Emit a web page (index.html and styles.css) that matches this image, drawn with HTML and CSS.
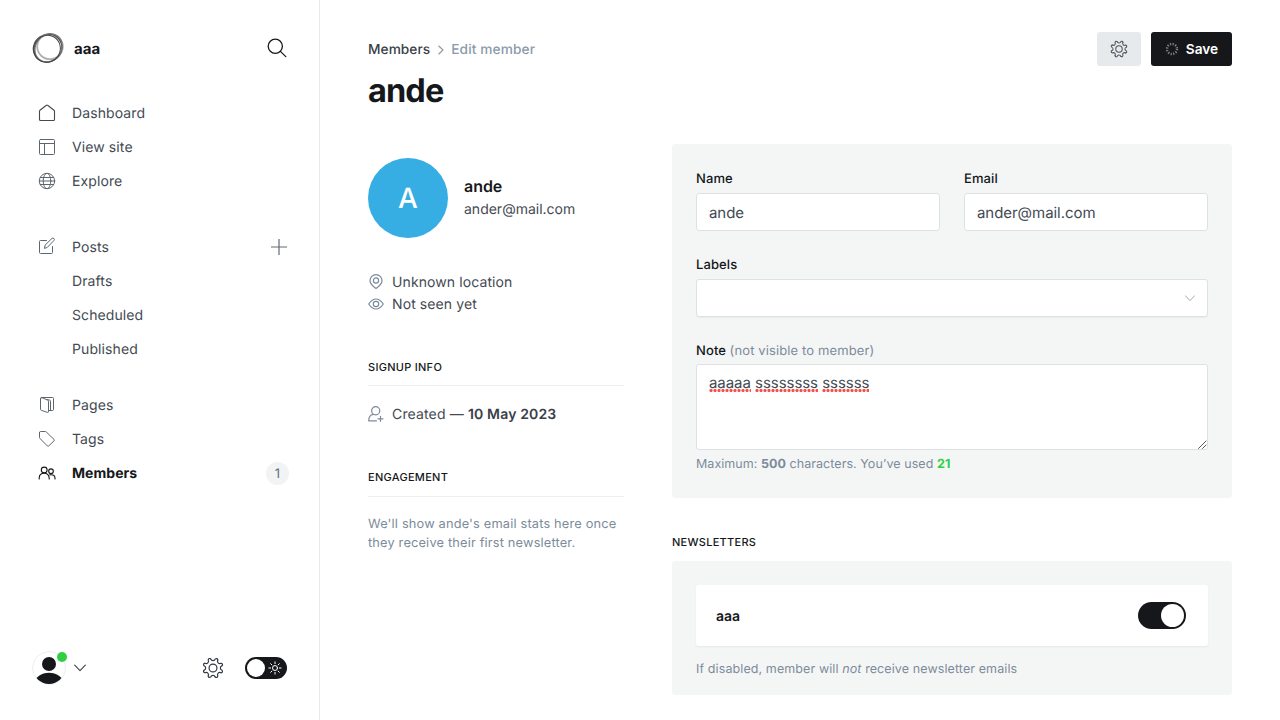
FILE: index.html
```html
<!DOCTYPE html>
<html lang="en">
<head>
<meta charset="utf-8">
<title>Members - ande</title>
<link rel="stylesheet" href="styles.css">
</head>
<body>
<svg class="defs" aria-hidden="true">
  <symbol id="gear" viewBox="-12 -12 24 24">
    <g id="gear-body">
      <g id="gear-half">
        <g id="gear-quarter">
          <path id="gear-tooth" d="M-2.5-9.9C-1.6-7.3 1.6-7.3 2.5-9.9Q4.9-11.1 5.2-8.75"/>
          <use href="#gear-tooth" transform="rotate(45)"/>
        </g>
        <use href="#gear-quarter" transform="rotate(90)"/>
      </g>
      <use href="#gear-half" transform="rotate(180)"/>
      <circle r="4.3"/>
    </g>
  </symbol>
</svg>
<div class="app">
  <aside class="sidebar">
    <header class="brand">
      <svg class="brand-logo" viewBox="0 0 32 32">
        <ellipse cx="18" cy="14.6" rx="12.800" ry="12.600" stroke="#b0b0b0" stroke-width="1.8"/>
        <ellipse cx="15.6" cy="16.2" rx="14.6" ry="13.6" transform="rotate(-35 15.6 16.2)" stroke="#444" stroke-width="1.200"/>
        <ellipse cx="16.6" cy="15.8" rx="14.800" ry="12.800" transform="rotate(-50 16.6 15.8)" stroke="#777" stroke-width="1.200"/>
        <ellipse cx="15.200" cy="16.8" rx="13" ry="13.6" transform="rotate(30 15.200 16.8)" stroke="#444" stroke-width="1"/>
      </svg>
      <span class="brand-name">aaa</span>
      <svg class="search" viewBox="0 0 20 20"><circle cx="8.3" cy="8.3" r="7.1"/><path d="M13.4 13.4l5.400 5.200"/></svg>
    </header>
    <nav class="nav">
      <ul class="nav-group">
        <li><svg viewBox="0 0 18 18"><path d="M1.5 7.2v8.3q0 1 1 1h13q1 0 1-1V7.2q0-.6-.5-1L9.6 1.3Q9 .8 8.4 1.3L2 6.2q-.5.4-.5 1z"/></svg><span>Dashboard</span></li>
        <li><svg class="soft" viewBox="0 0 18 18"><rect x="1.5" y="1.5" width="15" height="15" rx="1"/><path d="M1.5 5.500h15M6.500 5.500v11"/></svg><span>View site</span></li>
        <li><svg class="soft" viewBox="0 0 18 18"><circle cx="9" cy="9" r="7.7"/><ellipse cx="9" cy="9" rx="3.8" ry="7.7"/><path d="M1.3 9h15.4M2.3 5.500h13.4M2.3 12.500h13.4"/></svg><span>Explore</span></li>
      </ul>
      <ul class="nav-group posts">
        <li><svg class="soft pencil" viewBox="0 0 18 18"><path d="M8.500 3.500h-6q-1 0-1 1v11q0 1 1 1h11q1 0 1-1v-6M6.500 11l.7-3L14 1.400q1-.8 1.900.1t.1 1.900L9.500 10.200z"/></svg><span>Posts</span><svg class="plus" viewBox="0 0 16 16"><path d="M8 0v16M0 8h16"/></svg></li>
        <li class="child"><span>Drafts</span></li>
        <li class="child"><span>Scheduled</span></li>
        <li class="child"><span>Published</span></li>
      </ul>
      <ul class="nav-group">
        <li><svg class="soft" viewBox="0 0 18 18"><path d="M2.5 2.5v10.8q0 .8.8 1l6.2 2.1q1 .3 1-.7V5.2q0-.9-.9-1.2L4 1.700q-1.500-.4-1.500.8zM3.3 1.500h11.2q1 0 1 1v11q0 1-1 1h-4M8.500 3.600l3 .4q1 .3 1 1.200v9"/></svg><span>Pages</span></li>
        <li><svg class="soft" viewBox="0 0 18 18"><path d="M1.5 2.5v5q0 .5.4.9l7.4 7.5q.8.7 1.5 0l5.2-5q.8-.7 0-1.5L8.3 2Q7.9 1.5 7.2 1.5H2.5q-1 0-1 1z"/></svg><span>Tags</span></li>
        <li class="active"><svg viewBox="0 0 18 18"><circle cx="6.2" cy="6" r="2.9"/><path d="M1.200 15v-1.200q.2-4.500 5-4.500 4.300 0 5 4.500V15"/><circle cx="13" cy="7.200" r="2.3"/><path d="M11.8 10.900q5-.9 5.200 3.100v1"/></svg><span>Members</span><b class="count">1</b></li>
      </ul>
    </nav>
    <footer class="side-foot">
      <div class="avatar">
        <svg viewBox="0 0 34 34"><defs><clipPath id="face"><circle cx="17" cy="17" r="16"/></clipPath></defs><circle cx="17" cy="17" r="16.4" fill="#fff" stroke="#e6e8ea" stroke-width=".8"/><g clip-path="url(#face)" fill="#15171a"><circle cx="17" cy="13" r="7"/><ellipse cx="17" cy="32" rx="14" ry="10.3"/></g></svg>
        <i class="online"></i>
      </div>
      <svg class="chev" viewBox="0 0 12 8"><path d="M.7 1.200L6 6.600l5.300-5.400"/></svg>
      <svg class="gear big"><use href="#gear"/></svg>
      <div class="night"><i></i><svg viewBox="-7 -7 14 14"><circle r="2.5"/><path d="M0-6.1v1.7M0 6.1V4.4M-6.1 0h1.7M6.1 0H4.4M-4.3-4.3l1.2 1.2M4.3 4.3L3.1 3.1M-4.3 4.3l1.2-1.2M4.3-4.3L3.1-3.1"/></svg></div>
    </footer>
  </aside>
  <main class="main">
    <header class="top">
      <div>
        <div class="crumbs"><span>Members</span><svg viewBox="0 0 6 10"><path d="M.8 1l4.200 4-4.200 4"/></svg><span class="here">Edit member</span></div>
        <h1>ande</h1>
      </div>
      <div class="actions">
        <button class="btn btn-gear"><svg class="gear"><use href="#gear"/></svg></button>
        <button class="btn btn-save"><svg viewBox="-7 -7 14 14"><circle r="5"/></svg><span>Save</span></button>
      </div>
    </header>
    <div class="columns">
      <section class="profile">
        <div class="person">
          <div class="initial">A</div>
          <div><h3>ande</h3><p>ander@mail.com</p></div>
        </div>
        <div class="facts">
          <p><svg viewBox="0 0 16 16"><path d="M8 14.500Q2 10.300 2 6.500a6 5.900 0 0 1 12 0Q14 10.300 8 14.500z"/><circle cx="8" cy="6.500" r="2.6"/></svg><span>Unknown location</span></p>
          <p><svg viewBox="0 0 16 16"><path d="M.7 8Q4 3 8 3t7.300 5Q12 13 8 13T.7 8z"/><circle cx="8" cy="8" r="2.7"/></svg><span>Not seen yet</span></p>
        </div>
        <h4>Signup info</h4>
        <p class="created"><svg viewBox="0 0 16 16"><circle cx="7.7" cy="4.8" r="4.1"/><path d="M5.300 8.300Q.7 9 .7 14.800h7.800M12.500 10.300v5M10 12.800h5"/></svg><span>Created — <b>10 May 2023</b></span></p>
        <h4 class="engage">Engagement</h4>
        <p class="stats">We'll show ande's email stats here once they receive their first newsletter.</p>
      </section>
      <section class="details">
        <div class="panel form">
          <div class="pair">
            <div><label>Name</label><div class="input">ande</div></div>
            <div><label>Email</label><div class="input">ander@mail.com</div></div>
          </div>
          <label>Labels</label>
          <div class="input select"><svg viewBox="0 0 10 7"><path d="M.5.8L5 5.700 9.500.8"/></svg></div>
          <label>Note <span>(not visible to member)</span></label>
          <div class="input note"><span class="typo">aaaaa</span> <span class="typo">ssssssss</span> <span class="typo">ssssss</span><svg viewBox="0 0 9 9"><path d="M.5 8.500l7.500-7.500M4.500 8.500l3.500-3.500"/></svg></div>
          <p class="hint">Maximum: <b>500</b> characters. You’ve used <b class="used">21</b></p>
        </div>
        <h4 class="news-title">Newsletters</h4>
        <div class="panel news">
          <div class="news-card"><b>aaa</b><div class="toggle"><i></i></div></div>
          <p class="hint">If disabled, member will <em>not</em> receive newsletter emails</p>
        </div>
      </section>
    </div>
  </main>
</div>
</body>
</html>
```
FILE: styles.css
```css
* { box-sizing: border-box; margin: 0; padding: 0; }
body { font: 400 14px/20px Inter, "Liberation Sans", sans-serif; letter-spacing: .1px; color: #434a52; background: #fff; text-rendering: geometricPrecision; }
svg { display: block; flex: none; fill: none; stroke: currentColor; stroke-linecap: round; stroke-linejoin: round; }
.defs { position: absolute; width: 0; height: 0; }
.app { display: flex; width: 1280px; height: 720px; overflow: hidden; }

.sidebar { display: flex; flex-direction: column; width: 320px; flex: none; padding: 32px 32px 35px; border-right: 1px solid #e6e9eb; }
.brand { display: flex; align-items: center; height: 32px; margin-bottom: 32px; color: #15171a; }
.brand-logo { width: 32px; height: 32px; }
.brand-name { flex: 1; margin-left: 10px; font-size: 15px; font-weight: 700; letter-spacing: 0; padding-top: 1px; }
.search { width: 20px; height: 20px; stroke-width: 1.3; }
.nav { flex: 1; }
.nav-group { list-style: none; margin-bottom: 32px; }
.nav-group.posts { margin-bottom: 22px; }
.nav-group li { display: flex; align-items: center; height: 34px; padding-left: 6px; }
.nav-group li.child { padding-left: 40px; }
.nav-group li svg { width: 18px; height: 18px; margin-right: 16px; stroke-width: 1.1; }
.nav-group li svg.soft { color: #5d666f; stroke-width: 1; }
.nav-group li svg.pencil { margin-top: -2px; }
.nav-group li span { flex: 1; padding-top: 2px; }
.nav-group li svg.plus { width: 16px; height: 16px; margin: 0; color: #626b74; stroke-width: 1.2; stroke-linecap: butt; }
.nav-group .active { color: #15171a; font-weight: 700; }
.nav-group .active span { letter-spacing: .05px; }
.count { width: 23px; height: 23px; margin-right: -2px; border-radius: 50%; background: #f1f3f4; color: #626d79; font-weight: 400; font-size: 13px; line-height: 24px; text-align: center; }
.side-foot { display: flex; align-items: center; height: 34px; }
.avatar { position: relative; }
.avatar svg { width: 34px; height: 34px; stroke: none; }
.online { position: absolute; right: -1px; top: 1px; width: 10px; height: 10px; border-radius: 50%; background: #30cf43; }
.chev { width: 12px; height: 8px; margin: 0 116px 0 8px; stroke-width: 1.2; }
.gear { width: 18px; height: 18px; stroke-width: 1.4; }
.gear.big { width: 22px; height: 22px; stroke-width: 1.3; color: #303840; }
.night { display: flex; align-items: center; width: 42px; height: 22px; margin-left: 21px; padding: 0 5px 0 2px; justify-content: space-between; border-radius: 11px; background: #15171a; color: #fff; }
.night i { width: 18px; height: 18px; border-radius: 50%; background: #fff; }
.night svg { width: 14px; height: 14px; }

.main { flex: 1; padding: 32px 48px 0; }
.top { display: flex; justify-content: space-between; height: 112px; }
.crumbs { display: flex; align-items: center; height: 34px; font-size: 13.7px; font-weight: 500; letter-spacing: .05px; color: #394047; }
.crumbs span { padding-top: 2px; }
.crumbs svg { width: 6px; height: 10px; margin: 1px 7px 0 8px; color: #8f9aa5; stroke-width: 1.1; }
.crumbs .here { color: #8b9aaa; letter-spacing: .12px; }
h1 { font-size: 32.5px; line-height: 40px; margin-top: 5px; font-weight: 700; letter-spacing: -.9px; color: #15171a; }
.actions { display: flex; gap: 10px; }
.btn { display: flex; align-items: center; justify-content: center; height: 34px; border: 0; border-radius: 3px; font: 600 13.7px/20px Inter, sans-serif; }
.btn-gear { width: 44px; background: #e6eaed; color: #4b545d; }
.btn-save { width: 81px; gap: 7px; background: #15171a; color: #fff; }
.btn-save svg { width: 14px; height: 14px; color: #7d858c; stroke-width: 2.4; stroke-dasharray: 1.2 1.418; stroke-linecap: butt; }

.columns { display: flex; gap: 48px; }
.profile { width: 256px; padding-top: 14px; }
.person { display: flex; align-items: center; gap: 16px; height: 80px; margin-bottom: 33px; }
.initial { width: 80px; height: 80px; border-radius: 50%; background: #37aee3; color: #fff; font-size: 28px; line-height: 80px; font-weight: 500; text-align: center; letter-spacing: 0; }
h3 { font-size: 16px; line-height: 23px; font-weight: 600; letter-spacing: -.05px; color: #15171a; }
.person p { line-height: 24px; margin-bottom: -1px; letter-spacing: 0; }
.facts { margin-bottom: 42px; }
.facts p, .created { display: flex; align-items: center; gap: 8px; height: 22px; }
.facts span, .created span { padding-top: 2px; }
.facts svg, .created svg { width: 16px; height: 16px; color: #7c8b9a; stroke-width: 1.2; }
.created { letter-spacing: .15px; }
.created b { font-weight: 600; color: #394047; }
h4 { font-size: 11px; line-height: 20px; font-weight: 500; text-transform: uppercase; color: #15171a; letter-spacing: .28px; }
.profile h4 { height: 29px; border-bottom: 1px solid #eceeef; }
.created { margin: 17px 0 42px; }
.profile .engage { height: 30px; }
.stats { margin-top: 18px; font-size: 12.8px; line-height: 19px; letter-spacing: .17px; color: #7c8b9a; }

.details { width: 560px; }
.panel { padding: 24px; border-radius: 3px; background: #f4f6f6; }
.form { height: 354px; }
.pair { display: grid; grid-template-columns: 1fr 1fr; gap: 24px; margin-bottom: 23px; }
label { display: block; height: 25px; font-size: 13px; line-height: 22px; font-weight: 500; color: #15171a; letter-spacing: .1px; }
label span { font-weight: 400; color: #7c8b9a; letter-spacing: .12px; }
.input { height: 38px; padding: 0 12px; border: 1px solid #dde1e3; border-radius: 3px; background: #fff; font-size: 15px; line-height: 37px; letter-spacing: -.05px; }
.select { display: flex; align-items: center; justify-content: flex-end; height: 38px; margin-bottom: 23px; padding-right: 12px; box-shadow: 0 1px 1px rgba(0,0,0,.04); }
.select svg { width: 10px; height: 7px; color: #9eabb6; }
.note { position: relative; height: 86px; margin-top: -1px; padding-top: 7px; line-height: 22px; }
.note svg { position: absolute; right: 0; bottom: 0; width: 9px; height: 9px; color: #444; stroke-width: .9; }
.typo { background: radial-gradient(circle at 2px 1.5px, #f5504b 1.1px, #fbd0ce 1.8px, transparent 2px) 0 100% / 4px 3px repeat-x; }
.hint { margin-top: 5px; font-size: 12.5px; line-height: 20px; letter-spacing: .05px; color: #7c8b9a; }
.hint b { font-weight: 700; }
.hint .used { color: #30cf43; }
.news-title { margin: 34px 0 9px; }
.news { height: 134px; }
.news-card { display: flex; align-items: center; justify-content: space-between; height: 61px; padding: 0 22px 0 20px; border-radius: 3px; background: #fff; box-shadow: 0 1px 2px rgba(0,0,0,.06); color: #15171a; }
.news-card b { font-weight: 600; letter-spacing: 0; padding-top: 3px; }
.toggle { display: flex; justify-content: flex-end; width: 48px; height: 27px; margin-bottom: 1px; padding: 2px; border-radius: 14px; background: #15171a; }
.toggle i { width: 23px; height: 23px; border-radius: 50%; background: #fff; }
.news .hint { margin-top: 14px; letter-spacing: .1px; }
```
